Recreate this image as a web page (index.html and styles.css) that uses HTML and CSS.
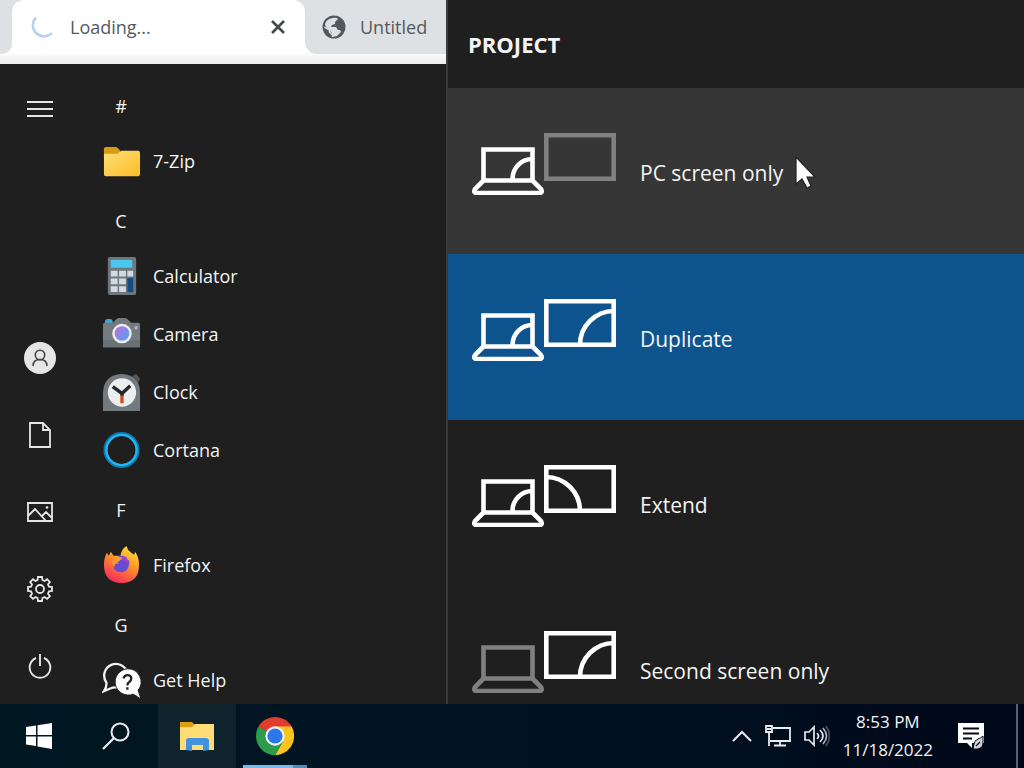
FILE: index.html
```
<!DOCTYPE html>
<html lang="en">
<head>
    <meta charset="UTF-8">
    <meta name="viewport" content="width=device-width, initial-scale=1.0">
    <title>Project</title>
    <link rel="stylesheet" href="styles.css">
</head>
<body>
    <!-- shared shapes for the project options -->
    <svg class="defs" aria-hidden="true">
        <symbol id="laptop" viewBox="0 0 72 62">
            <path d="M11.5 16.5h49v31h-49zM11.500 47.500L3 56q-2 4 1.500 4h63q3.500 0 1.500-4l-8.500-8.500" fill="none" stroke="currentColor" stroke-width="4.600"/>
        </symbol>
        <symbol id="monitor" viewBox="0 0 72 48">
            <path d="M2.300 2.300h67.400v43.400H2.300z" fill="none" stroke="currentColor" stroke-width="4.600"/>
        </symbol>
    </svg>

    <div class="desktop">
        <div class="left">
            <div class="tabs">
                <div class="tab-edge"></div>
                <div class="tab active">
                    <svg width="24" height="24" viewBox="0 0 24 24"><path d="M6 2.500A11 11 0 1 0 22 18" fill="none" stroke="#b5d0f2" stroke-width="2.500"/></svg>
                    <span class="tab-title">Loading...</span>
                    <button class="tab-close" aria-label="Close tab">
                        <svg width="14" height="14" viewBox="0 0 14 14"><path d="M1 1l12 12M13 1L1 13" stroke="#45494d" stroke-width="2.600"/></svg>
                    </button>
                </div>
                <div class="tab">
                    <svg width="24" height="24" viewBox="0 0 24 24"><circle cx="12" cy="12" r="11.500" fill="#50595d"/><path d="M10 3q5-1 6 1l-3 3v2l-3 1-1 2h5l2 3h2l1 2-4 4-5 1v-4l-3-3-4-5q0-5 7-7z" fill="#dde1e4"/><path d="M2.500 12l5 3v2l3 3v2" fill="none" stroke="#dde1e4" stroke-width="1.500"/></svg>
                    <span class="tab-title">Untitled</span>
                </div>
            </div>

            <div class="start">
                <nav class="rail">
                    <button class="menu" aria-label="Menu"><svg width="26" height="18" viewBox="0 0 26 18"><path d="M0 2h26M0 9h26M0 16h26" stroke="#e6e6e6" stroke-width="2"/></svg></button>
                    <button aria-label="Account"><svg width="32" height="32" viewBox="0 0 32 32"><circle cx="16" cy="16" r="16" fill="#e6e6e6"/><g fill="none" stroke="#444" stroke-width="1.600"><circle cx="16" cy="13" r="4.700"/><path d="M9 24q0-6.500 7-6.500t7 6.500"/></g></svg></button>
                    <button aria-label="Documents"><svg width="22" height="26" viewBox="0 0 22 26"><path d="M1 1h13l7 7v17H1zM14 1v7h7" fill="none" stroke="#e6e6e6" stroke-width="1.800"/></svg></button>
                    <button aria-label="Pictures"><svg width="26" height="20" viewBox="0 0 26 20"><path d="M1 1h24v18H1zM1 14l7-7 11 12M15 14l4-4 6 6" fill="none" stroke="#e6e6e6" stroke-width="1.800"/><circle cx="20" cy="5.500" r="1.300" fill="#e6e6e6"/></svg></button>
                    <button aria-label="Settings"><svg width="26" height="26" viewBox="0 0 26 26"><g fill="none" stroke="#e6e6e6" stroke-width="1.800"><path d="M10.600 4L11 1h4l.4 3 2.300 1 2.400-1.800 2.800 2.800L21 8.400l1 2.200 3 .4v4l-3 .4-1 2.300 1.900 2.400-2.800 2.800-2.400-1.900-2.300 1L15 25h-4l-.4-3-2.200-1L6 22.900l-2.800-2.800L5 17.700l-1-2.300L1 15v-4l3-.4 1-2.200L3.200 6 6 3.200 8.400 5z"/><circle cx="13" cy="13" r="4"/></g></svg></button>
                    <button aria-label="Power"><svg width="24" height="26" viewBox="0 0 24 26"><path d="M8 5a10.300 10.300 0 1 0 8 0M12 1v12" fill="none" stroke="#e6e6e6" stroke-width="1.900"/></svg></button>
                </nav>

                <ul class="apps">
                    <li class="letter">#</li>
                    <li><a href="#">
                        <svg viewBox="0 0 40 40"><defs><linearGradient id="folder" x2="1" y2="1"><stop stop-color="#ffdf7a"/><stop offset="1" stop-color="#fbbd25"/></linearGradient></defs><path d="M2 7q0-2 2-2h11l4 4v6H2z" fill="#d99b12"/><path d="M2 12h14l4-3h17q2 0 2 2v22q0 2-2 2H4q-2 0-2-2z" fill="url(#folder)"/></svg>
                        7-Zip</a></li>
                    <li class="letter">C</li>
                    <li><a href="#">
                        <svg viewBox="0 0 40 40"><rect x="6" width="29" height="39" rx="2" fill="#6d787e"/><path d="M9 3h22v8H9z" fill="#4bc8ef"/><path d="M9 14h7v6H9zM17.500 14h7v6h-7zM26 14h6v6h-6zM9 22h7v6H9zM17.500 22h7v6h-7zM9 30h7v6H9zM17.500 30h7v6h-7z" fill="#d3d8e2"/><path d="M26 21.500h6V36h-6z" fill="#154b83"/></svg>
                        Calculator</a></li>
                    <li><a href="#">
                        <svg viewBox="0 0 40 40"><defs><linearGradient id="lens" x2="1" y2="1"><stop stop-color="#c86ae2"/><stop offset="1" stop-color="#43a8ef"/></linearGradient></defs><path d="M3 9V7q0-3 3-3h2q3 0 3 3v2z" fill="#3aa9d0"/><path d="M1 10q0-2 2-2h8l4-4q1-1 3-1h5q2 0 3 1l4 4h7q2 0 2 2v23H1z" fill="#747b80"/><path d="M1 26h38v7H1z" fill="#697176"/><circle cx="20.500" cy="19" r="10" fill="#eee"/><circle cx="20.500" cy="19" r="7.500" fill="url(#lens)"/><circle cx="35" cy="13" r="1.800" fill="#aeb4b8"/></svg>
                        Camera</a></li>
                    <li><a href="#">
                        <svg viewBox="0 0 40 40"><path d="M1 39V20Q2 2 20 1q19 1 19 19v19z" fill="#737a7f"/><path d="M31 3l4-2 4 5-2 4z" fill="#50565a"/><circle cx="20.500" cy="20" r="14.500" fill="#eceff0"/><path d="M20.500 21v10" stroke="#d64a22" stroke-width="3.500"/><path d="M11 14l9.500 7 8.500-8M20.500 20v3" fill="none" stroke="#24282a" stroke-width="3.500"/></svg>
                        Clock</a></li>
                    <li><a href="#">
                        <svg viewBox="0 0 40 40"><circle cx="20" cy="19.500" r="16.500" fill="none" stroke="#087cae" stroke-width="4"/><circle cx="20" cy="19.500" r="15.500" fill="none" stroke="#25b4ef" stroke-width="2.400"/></svg>
                        Cortana</a></li>
                    <li class="letter">F</li>
                    <li><a href="#">
                        <svg viewBox="0 0 40 40"><defs><linearGradient id="fox" x1="0.800" y1="0" x2="0.300" y2="1"><stop stop-color="#ffe33d"/><stop offset=".45" stop-color="#ff9329"/><stop offset="1" stop-color="#f6275f"/></linearGradient></defs><path d="M5 7l2 3 2-4 3 4h7q1-7 6-10 1 4 5 7l3 2 1-3q4 6 4 13 0 19-18 19T2 19Q2 12 5 7z" fill="url(#fox)"/><path d="M13 14l5-4q8 0 8 4l2 1q0 12-9 12-8-1-7-8l6-1-5-2z" fill="#694bd2"/><path d="M14 11q6 0 10 2l-5 1-3 3q-4 0-3 5-5-6 1-11z" fill="#ff9a35"/><path d="M20 12q7-1 7 7-2-4-7-5z" fill="#a642c8"/></svg>
                        Firefox</a></li>
                    <li class="letter">G</li>
                    <li><a href="#">
                        <svg viewBox="0 0 40 40"><path d="M4.500 22A12 12 0 1 1 14 27q-3 0-5 1l-7 3q3-4 2.500-9z" fill="none" stroke="#f2f2f2" stroke-width="2.400"/><path d="M26 8a13.500 13.500 0 1 0 6 26l8 5-3-9A13.500 13.500 0 0 0 26 8z" fill="#fff" stroke="#1f1f1f"/><path d="M22 18q1-3.500 4-3.500 4 0 4 3.500 0 2-2 3.500-2 1-2 3.500M26 27v2.500" fill="none" stroke="#222" stroke-width="2.400"/></svg>
                        Get Help</a></li>
                </ul>
            </div>
        </div>

        <section class="project">
            <h1>PROJECT</h1>
            <button class="option hover">
                <svg width="144" height="76" viewBox="0 0 144 76">
                    <use href="#laptop" width="72" height="62"/>
                    <path class="arc" d="M40.500 46A20 20 0 0 1 61 26"/>
                    <use class="off" href="#monitor" x="72" width="72" height="48"/>
                </svg>
                <span>PC screen only</span>
            </button>
            <button class="option selected">
                <svg width="144" height="76" viewBox="0 0 144 76">
                    <use href="#laptop" width="72" height="62"/>
                    <path class="arc" d="M40.500 46A20 20 0 0 1 61 26"/>
                    <use href="#monitor" x="72" width="72" height="48"/>
                    <path class="arc" d="M108 46A34 34 0 0 1 142 12"/>
                </svg>
                <span>Duplicate</span>
            </button>
            <button class="option">
                <svg width="144" height="76" viewBox="0 0 144 76">
                    <use href="#laptop" width="72" height="62"/>
                    <path class="arc" d="M40.500 46A20 20 0 0 1 61 26"/>
                    <use href="#monitor" x="72" width="72" height="48"/>
                    <path class="arc" d="M74 12A34 34 0 0 1 108 46"/>
                </svg>
                <span>Extend</span>
            </button>
            <button class="option">
                <svg width="144" height="76" viewBox="0 0 144 76">
                    <use class="off" href="#laptop" width="72" height="62"/>
                    <use href="#monitor" x="72" width="72" height="48"/>
                    <path class="arc" d="M108 46A34 34 0 0 1 142 12"/>
                </svg>
                <span>Second screen only</span>
            </button>
            <svg class="cursor" width="22" height="34" viewBox="0 0 22 34"><path d="M1 1v27l6-5 5 9 4-2-4-9h8z" fill="#fff" stroke="#222" stroke-width="1.200"/></svg>
        </section>
    </div>

    <footer class="taskbar">
        <button class="task" aria-label="Start"><svg width="26" height="26" viewBox="0 0 26 26"><path d="M0 4l10-1.500V12H0zM11.500 2.200L26 0v12H11.500zM0 13.500h10V23L0 21.600zM11.500 13.500H26V26l-14.500-2.400z" fill="#fff"/></svg></button>
        <button class="task" aria-label="Search"><svg width="28" height="28" viewBox="0 0 28 28"><circle cx="18" cy="10" r="8.500" fill="none" stroke="#e8edf0" stroke-width="2"/><path d="M12 16L1 27" stroke="#e8edf0" stroke-width="2.300"/></svg></button>
        <button class="task explorer" aria-label="File Explorer"><svg width="36" height="32" viewBox="0 0 36 32"><path d="M1 2h12l3 3v4H1z" fill="#e49b10"/><path d="M1 7h12l3-3h19v26H1z" fill="#ffdc76"/><path d="M7 30V21q0-3 3-3h17q3 0 3 3v9l-6 1v-6H13v6z" fill="#4193df"/></svg></button>
        <button class="task chrome" aria-label="Google Chrome"><svg width="40" height="40" viewBox="0 0 40 40"><path d="M20 20L3.500 10.500A19.200 19.200 0 0 1 36.600 10.500z" fill="#e33b2e"/><path d="M20 10.500h16.600A19.200 19.200 0 0 1 20 39.200l8-14z" fill="#fcc31e"/><path d="M3.500 10.500A19.200 19.200 0 0 0 20 39.200L28.300 25 20 20z" fill="#2c9c4b"/><path d="M3.500 10.500L20 20V10.500z" fill="#e33b2e"/><path d="M3.500 10.500L12 25l8-5z" fill="#2c9c4b"/><circle cx="20" cy="20" r="9.700" fill="#f1f5f9"/><circle cx="20" cy="20" r="7.600" fill="#2879ea"/></svg></button>

        <div class="tray">
            <button aria-label="Show hidden icons"><svg width="20" height="12" viewBox="0 0 20 12"><path d="M1 11l9-9 9 9" fill="none" stroke="#e8ebf0" stroke-width="2"/></svg></button>
            <button aria-label="Network"><svg width="26" height="22" viewBox="0 0 26 22"><path d="M8 3h17v13H5M15 16v4M9 20.500h12M1 1h6v6H1zM4 7v14M2 4h4" fill="none" stroke="#e8ebf0" stroke-width="1.800"/></svg></button>
            <button aria-label="Volume"><svg width="26" height="22" viewBox="0 0 26 22"><g fill="none" stroke="#e8ebf0" stroke-width="1.700"><path d="M1 7h4l5-5v18l-5-5H1zM13 8q3 3 0 6M16 5q6 6 0 12"/><path d="M19 3q7 8 0 16" opacity=".75"/><path d="M22 1q7 10 0 20" opacity=".3"/></g></svg></button>
            <div class="clock"><time>8:53 PM</time><time>11/18/2022</time></div>
            <button class="notes" aria-label="Notifications"><svg width="27" height="27" viewBox="0 0 27 27"><path d="M0 0h26v20H14v5l-5-5H0z" fill="#fff"/><path d="M5 5.500h16M5 10.500h16M5 15.500h9" stroke="#020c1c" stroke-width="1.800"/><path d="M25 13q-2 2-5 3-4 2-4 5l-1 5q10 1 10-6z" fill="#cfd4da" stroke="#020c1c"/><path d="M18 23l4-4" stroke="#020c1c" stroke-width="1.300"/></svg></button>
        </div>
    </footer>
</body>
</html>
```
FILE: styles.css
```
* { box-sizing: border-box; }
body {
    display: flex;
    flex-direction: column;
    height: 100vh;
    margin: 0;
    overflow: hidden;
    background: #1f1f1f;
    color: #f4f4f4;
    font-family: "Open Sans", "Noto Sans", sans-serif;
}
button { padding: 0; border: none; background: none; color: inherit; font: inherit; cursor: pointer; }
svg { display: block; flex-shrink: 0; }
.defs { position: absolute; width: 0; height: 0; }

.desktop { display: grid; grid-template-columns: 448px 1fr; grid-template-rows: minmax(0, 1fr); flex: 1; min-height: 0; overflow: hidden; }
.left { display: flex; flex-direction: column; min-height: 0; border-right: 2px solid #3b3b3b; }

/* browser tabs */
.tabs { display: flex; flex-shrink: 0; height: 64px; padding-bottom: 10px; background: linear-gradient(#fff 80%, #ececec); color: #55595d; font-size: 18px; }
.tab-edge { width: 12px; background: #dee1e4; border-bottom-right-radius: 10px; }
.tab { display: flex; flex: 1; align-items: center; gap: 14px; padding-left: 17px; background: #dde1e4; border-bottom-left-radius: 12px; }
.tab.active { flex: 0 0 293px; gap: 16px; padding: 0 20px 0 18px; background: #fff; border-radius: 12px 12px 0 0; box-shadow: 0 -12px 0 #dee1e4; }
.tab-close { margin-left: auto; }

/* start menu */
.start { display: flex; flex: 1; min-height: 0; }
.rail { display: flex; flex-direction: column; width: 80px; }
.rail button { display: flex; align-items: center; justify-content: center; height: 77px; }
.rail .menu { height: 90px; margin-bottom: auto; }
.apps { flex: 1; margin: 0; padding: 11px 0 0 22px; list-style: none; font-size: 18px; }
.apps a { display: flex; align-items: center; gap: 12px; height: 58px; color: inherit; text-decoration: none; }
.apps svg { width: 39px; height: 39px; }
.letter { width: 38px; height: 57px; padding-top: 6px; line-height: 51px; text-align: center; }

/* project panel */
.project { position: relative; font-size: 21px; }
.project h1 { margin: 0; padding-left: 20px; font-size: 22px; line-height: 88px; }
.option { display: flex; align-items: center; gap: 24px; width: 100%; min-height: 166px; padding-left: 24px; text-align: left; }
.option svg { color: #fff; }
.option span { padding-top: 4px; }
.option.hover { background: #363636; }
.option.selected { background: #0d548e; }
.arc { fill: none; stroke: currentColor; stroke-width: 4.6; }
.off { color: #808080; }
.project .cursor { position: absolute; left: 347px; top: 156px; }

/* taskbar */
.taskbar { display: flex; flex-shrink: 0; height: 64px; background: linear-gradient(90deg, #001722, #001421 50%, #000719); }
.task { display: flex; align-items: center; justify-content: center; width: 77px; }
.explorer { width: 78px; margin-left: 4px; background: #0f232d; }
.chrome { position: relative; width: 78px; }
.chrome::after { content: ""; position: absolute; left: 7px; right: 7px; bottom: 0; height: 3px; background: linear-gradient(90deg, #76b9ed 78%, #5689b4 78%); }
.tray { display: flex; align-items: center; gap: 13px; margin-left: auto; margin-right: 6px; padding-right: 31px; border-right: 2px solid #5a6270; }
.clock { display: flex; flex-direction: column; align-items: center; font-size: 17px; line-height: 28px; }
.notes { margin-left: 12px; }
```
